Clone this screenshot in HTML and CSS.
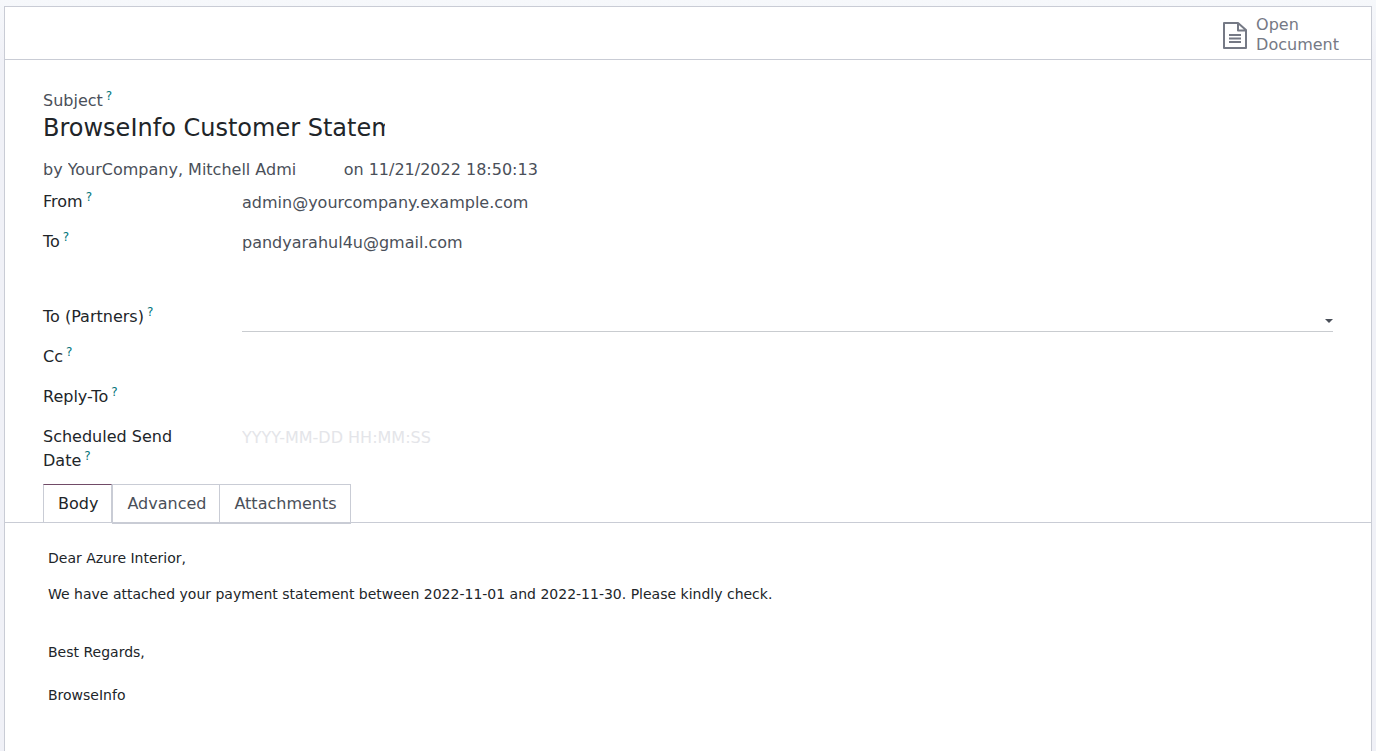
FILE: index.html
```html
<!DOCTYPE html>
<html lang="en">
<head>
<meta charset="utf-8">
<meta name="viewport" content="width=device-width, initial-scale=1">
<title>BrowseInfo Customer Statement</title>
<link rel="stylesheet" href="styles.css">
</head>
<body>
<main class="sheet">
  <header class="button-box">
    <button class="stat-button" type="button">
      <svg class="stat-icon" viewBox="0 0 24 28" width="24" height="28" aria-hidden="true">
        <path d="M1 2H15L23 9V27H1Z M15 2V9.500H23" fill="none" stroke="currentColor" stroke-width="2" stroke-linejoin="round"/>
        <path d="M6 14H18M6 17.500H18M6 21H18" fill="none" stroke="currentColor" stroke-width="1.800"/>
      </svg>
      <span class="stat-text">Open<br>Document</span>
    </button>
  </header>

  <form class="form">
    <div class="title-block">
      <label class="subject-label" for="subject">Subject<sup class="help">?</sup></label>
      <input class="subject" id="subject" type="text" value="BrowseInfo Customer Statement">
    </div>
    <div class="byline">
      <span>by</span>
      <input class="author" type="text" aria-label="Author" value="YourCompany, Mitchell Admi">
      <span>on 11/21/2022 18:50:13</span>
    </div>

    <div class="fields">
      <div class="field">
        <label class="label" for="from">From<sup class="help">?</sup></label>
        <input class="value" id="from" type="text" value="admin@yourcompany.example.com">
      </div>
      <div class="field field-tall">
        <label class="label" for="to">To<sup class="help">?</sup></label>
        <textarea class="value" id="to" rows="2">pandyarahul4u@gmail.com</textarea>
      </div>
      <div class="field">
        <label class="label" for="partners">To (Partners)<sup class="help">?</sup></label>
        <div class="picker">
          <input class="value" id="partners" type="text">
          <button class="caret" type="button" aria-label="Show partners"></button>
        </div>
      </div>
      <div class="field">
        <label class="label" for="cc">Cc<sup class="help">?</sup></label>
        <input class="value" id="cc" type="text">
      </div>
      <div class="field">
        <label class="label" for="reply">Reply-To<sup class="help">?</sup></label>
        <input class="value" id="reply" type="text">
      </div>
      <div class="field">
        <label class="label" for="date">Scheduled Send Date<sup class="help">?</sup></label>
        <input class="value" id="date" type="text" placeholder="YYYY-MM-DD HH:MM:SS">
      </div>
    </div>
  </form>

  <nav class="tabs" role="tablist">
    <button class="tab tab-active" type="button" role="tab" aria-selected="true">Body</button>
    <button class="tab" type="button" role="tab" aria-selected="false">Advanced</button>
    <button class="tab" type="button" role="tab" aria-selected="false">Attachments</button>
  </nav>

  <section class="message" role="tabpanel">
    <p>Dear Azure Interior,</p>
    <p>We have attached your payment statement between 2022-11-01 and 2022-11-30. Please kindly check.</p>
    <p class="closing">Best Regards,</p>
    <p class="signature">BrowseInfo</p>
  </section>
</main>
</body>
</html>
```
FILE: styles.css
```css
* {
  box-sizing: border-box;
}

body {
  margin: 0;
  min-height: 100vh;
  display: flex;
  padding: 6px 4px 0;
  background: linear-gradient(#f6f8fb, #f0f1f7 60px);
  color: #212529;
  font: 16px/24px "DejaVu Sans", sans-serif;
}

input,
textarea,
button {
  margin: 0;
  padding: 0;
  border: 0;
  background: none;
  color: inherit;
  font: inherit;
}

.sheet {
  flex: 1;
  min-width: 0;
  border: 1px solid #c9ccd5;
  border-bottom: 0;
  background: #fff;
}

.button-box {
  display: flex;
  justify-content: flex-end;
  padding: 8px 32px 4px;
  border-bottom: 1px solid #c9ccd5;
}

.stat-button {
  display: flex;
  align-items: center;
  gap: 9px;
  color: #757985;
  line-height: 20px;
  text-align: left;
}

.form {
  padding: 29px 38px 0;
  color: #4a4f59;
}

.subject-label {
  display: block;
}

.help {
  margin-left: 3px;
  color: #01737a;
  font-size: 12px;
  line-height: 0;
}

.subject {
  display: block;
  width: 342px;
  max-width: 100%;
  color: #212529;
  font-size: 24px;
  line-height: 30px;
}

.byline {
  display: flex;
  gap: 5px;
  margin-top: 15px;
}

.author {
  width: 271px;
  min-width: 0;
}

.fields {
  display: grid;
  gap: 16px;
  margin-top: 8px;
}

.field {
  display: grid;
  grid-template-columns: 160px minmax(0, 1fr);
  column-gap: 39px;
  align-items: start;
}

.field-tall {
  margin-bottom: 8px;
}

.label {
  color: #212529;
}

.value {
  display: block;
  width: 100%;
  height: 24px;
  padding-top: 1px;
  resize: none;
}

textarea.value {
  height: 51px;
  overflow: hidden;
}

.value::placeholder {
  color: #e4e5e9;
  opacity: 1;
}

.picker {
  display: flex;
  align-items: flex-end;
  height: 27px;
  margin-bottom: -3px;
  border-bottom: 1px solid #c9ccd0;
}

.caret {
  flex: none;
  width: 8px;
  height: 4px;
  margin-bottom: 8px;
  background: #4a4f59;
  clip-path: polygon(0 0, 100% 0, 50% 100%);
}

.tabs {
  display: flex;
  margin-top: 11px;
  padding-left: 38px;
  border-bottom: 1px solid #c9ccd5;
}

.tab {
  height: 40px;
  margin: 0 0 -2px -1px;
  padding: 0 13px 0 14px;
  border: 1px solid #c9ccd5;
  border-bottom-width: 2px;
  color: #4a4f59;
}

.tab-active {
  height: 39px;
  margin: 0 0 -1px;
  border-top-color: #714b67;
  border-bottom-width: 1px;
  color: #212529;
}

.tab-active + .tab {
  margin-left: 0;
}

.message {
  padding: 24px 43px;
  font-size: 14px;
  line-height: 22px;
}

.message p {
  margin: 0 0 14px;
}

.message .closing {
  margin: 36px 0 21px;
}

.message .signature {
  margin: 0;
}
```
